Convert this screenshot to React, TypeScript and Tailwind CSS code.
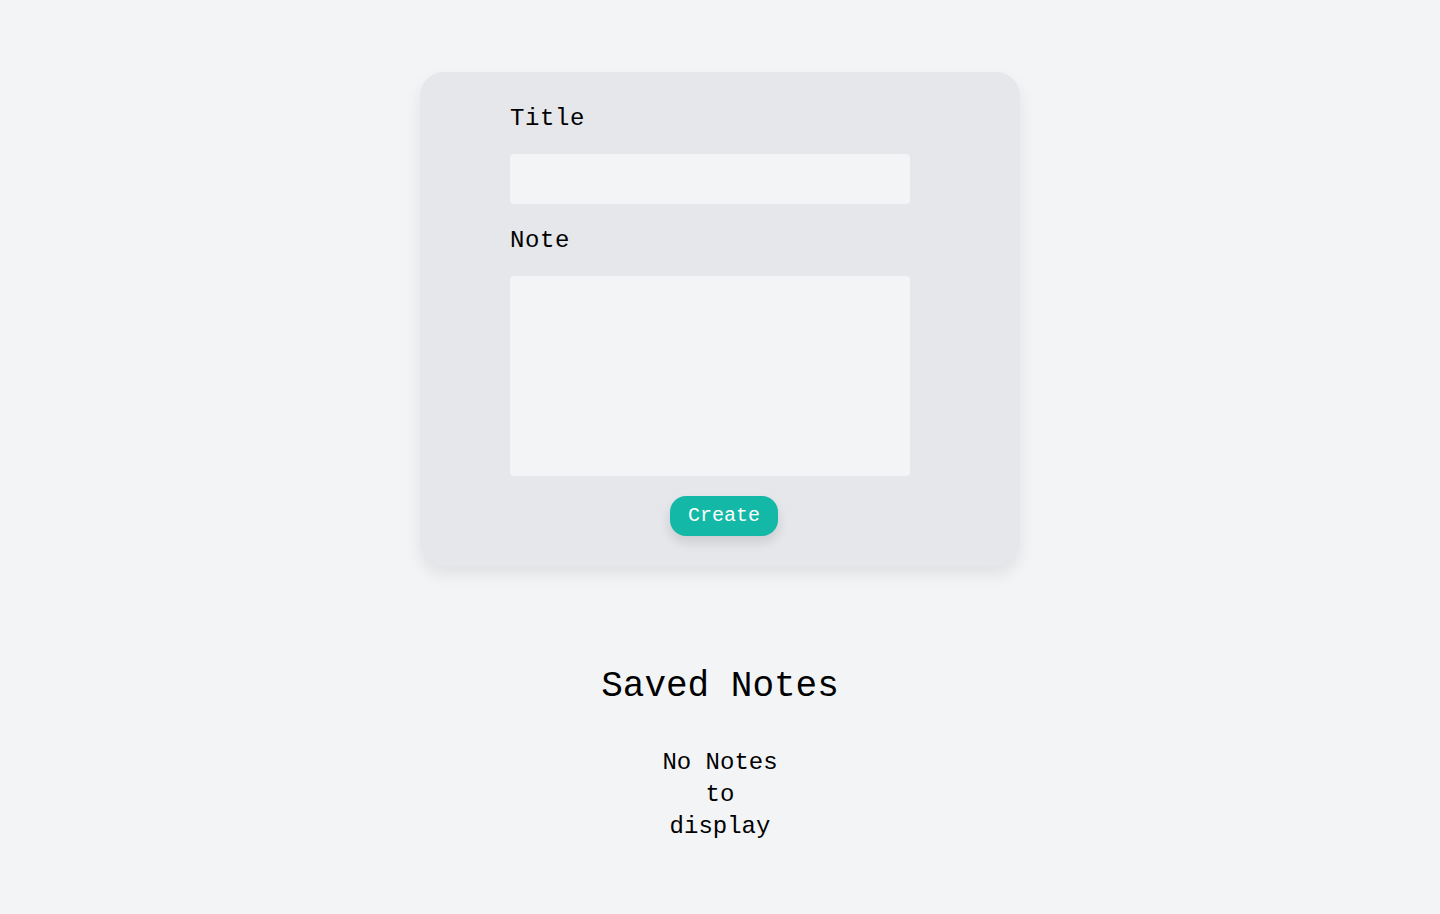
import { useState } from "react";

const mono = "font-['Liberation_Mono','Courier_New',monospace]";

export default function App() {
  const [title, setTitle] = useState("");
  const [note, setNote] = useState("");
  const notes: { title: string; body: string }[] = [];

  return (
    <div className={`min-h-screen bg-[#f3f4f6] text-black ${mono}`}>
      <div className="flex flex-col items-center pt-[72px] pb-16">
        <form
          onSubmit={(e) => e.preventDefault()}
          className="w-[600px] rounded-3xl bg-[#e5e7eb] pt-[29px] pb-[30px] shadow-[0_8px_16px_rgba(0,0,0,0.08)]"
        >
          <div className="ml-[90px] flex w-[400px] flex-col">
            <label className="block text-[24px] leading-[36px] tracking-wide">Title</label>
            <input
              value={title}
              onChange={(e) => setTitle(e.target.value)}
              className="mt-[17px] h-[50px] w-full rounded bg-[#f3f4f6] px-3 text-lg outline-none"
            />
            <label className="mt-[19px] block text-[24px] leading-[36px] tracking-wide">Note</label>
            <textarea
              value={note}
              onChange={(e) => setNote(e.target.value)}
              className="mt-[17px] h-[200px] w-full resize-none rounded bg-[#f3f4f6] p-3 text-lg outline-none"
            />
          </div>
          <div className="mt-5 flex justify-center pl-2">
            <button
              type="submit"
              className="h-10 w-[108px] rounded-2xl bg-[#14b8a6] text-[20px] text-white shadow-[0_6px_12px_rgba(0,0,0,0.12)]"
            >
              Create
            </button>
          </div>
        </form>

        <h2 className="mt-[101px] text-[36px] leading-[40px]">Saved Notes</h2>
        {notes.length === 0 ? (
          <p className="mt-10 w-32 text-center text-[24px] leading-[32px]">No Notes to display</p>
        ) : null}
      </div>
    </div>
  );
}
